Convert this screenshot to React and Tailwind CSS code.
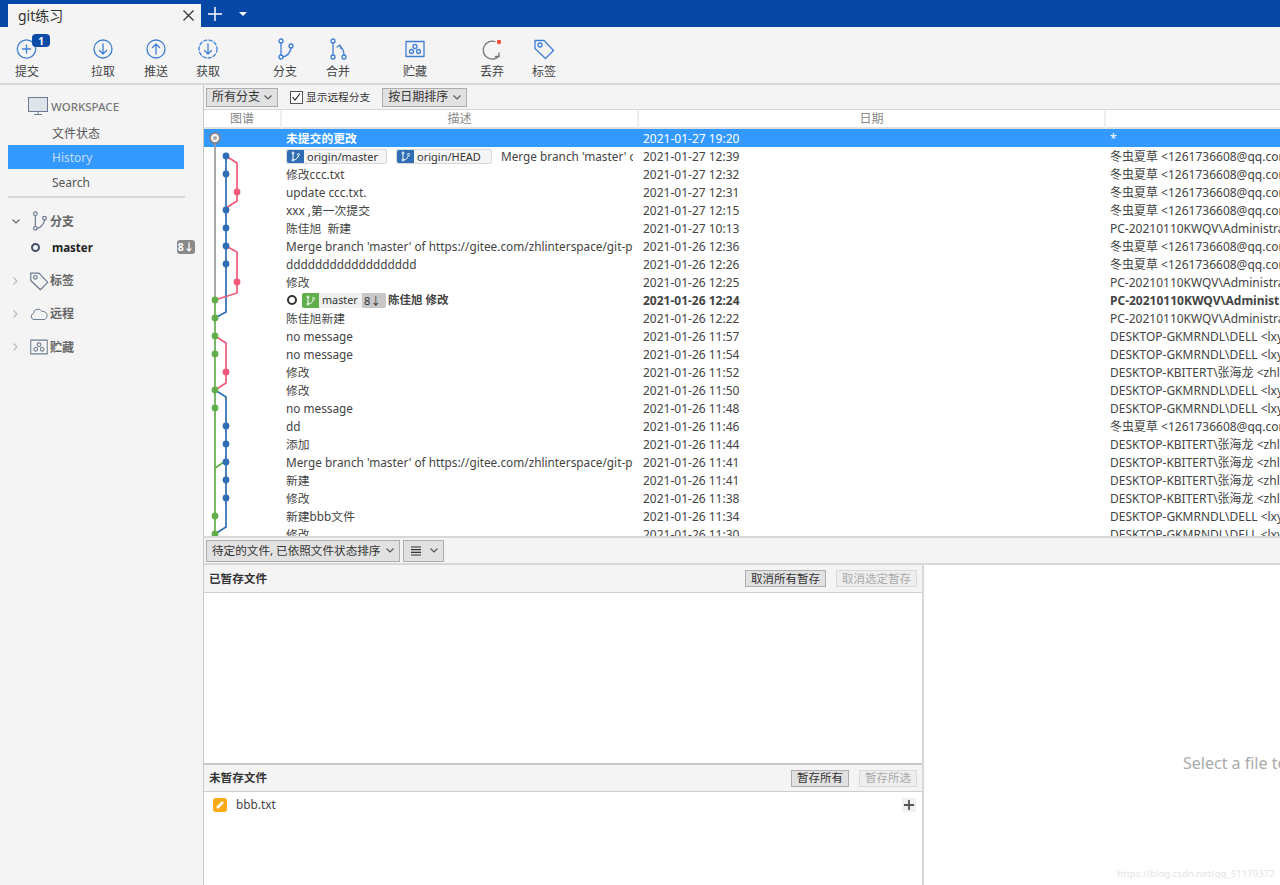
import React from "react";

const FONT = "font-['Noto_Sans','Noto_Sans_CJK_SC',sans-serif]";
const BLUE = "#3f7fd6";
const SLATE = "#6b7a90";

const Svg = ({ s = 24, children, c = BLUE, w = 1.3, vb = "0 0 24 24" }) => (
  <svg width={s} height={s} viewBox={vb} fill="none" stroke={c} strokeWidth={w} strokeLinecap="round" strokeLinejoin="round">
    {children}
  </svg>
);

const IconCommit = () => (
  <Svg>
    <circle cx="11.500" cy="12" r="9.200" />
    <path d="M11.500 8v8M7.500 12h8" />
  </Svg>
);
const IconPull = () => (
  <Svg>
    <circle cx="12" cy="12" r="9" />
    <path d="M12 7v10M8.500 13.500 12 17l3.500-3.500" />
  </Svg>
);
const IconPush = () => (
  <Svg>
    <circle cx="12" cy="12" r="9" />
    <path d="M12 17V7M8.500 10.500 12 7l3.500 3.500" />
  </Svg>
);
const IconFetch = () => (
  <Svg>
    <circle cx="12" cy="12" r="9" strokeDasharray="3.200 2.200" />
    <path d="M12 7v10M8.500 13.500 12 17l3.500-3.500" />
  </Svg>
);
const IconBranch = ({ c = BLUE, s = 24 }) => (
  <Svg c={c} s={s}>
    <circle cx="8" cy="4" r="2" />
    <circle cx="8" cy="20" r="2" />
    <circle cx="18" cy="9" r="2" />
    <path d="M8 6v12M10 20c4-1 7-4 8-9" />
  </Svg>
);
const IconMerge = () => (
  <Svg>
    <circle cx="7" cy="4" r="2" />
    <circle cx="7" cy="20" r="2" />
    <circle cx="18" cy="20" r="2" />
    <path d="M7 6v12M18 18c0-3-1-6-4-9M11 10l3-2 1 3.500" />
  </Svg>
);
const IconStash = ({ c = BLUE, s = 24, w = 1.3 }) => (
  <Svg c={c} s={s} w={w}>
    <rect x="3" y="4.500" width="18" height="15" />
    <circle cx="12" cy="9.500" r="2" />
    <circle cx="8.500" cy="14.500" r="2" />
    <circle cx="15.500" cy="14.500" r="2" />
  </Svg>
);
const IconDiscard = () => (
  <Svg c="#777">
    <path d="M15 4.500A9 9 0 1 0 19 19" />
    <path d="M19 16v3.500h-3.500" />
    <circle cx="19" cy="5" r="2.200" fill="#f0503c" stroke="none" />
  </Svg>
);
const IconTag = ({ c = BLUE, s = 24 }) => (
  <Svg c={c} s={s}>
    <path d="M3 3.500h9l9.500 10-8 8L3 11.500z" />
    <circle cx="8" cy="8" r="2" />
  </Svg>
);
const Chevron = ({ c = "#555" }) => (
  <svg width="8" height="5" viewBox="0 0 8 5" fill="none" stroke={c} strokeWidth="1.100">
    <path d="M.5.500 4 4 7.500.500" />
  </svg>
);
const MiniBranch = () => (
  <svg width="11" height="11" viewBox="0 0 11 11" fill="none" stroke="#fff" strokeWidth="1">
    <circle cx="3" cy="2" r="1" />
    <circle cx="3" cy="9" r="1" />
    <circle cx="8.500" cy="3.500" r="1" />
    <path d="M3 3v5M4 9c2.500-.5 4-2.500 4.500-4.500" />
  </svg>
);

const tools = [
  { l: "提交", i: <IconCommit />, ml: "ml-0", badge: true },
  { l: "拉取", i: <IconPull />, ml: "ml-6" },
  { l: "推送", i: <IconPush />, ml: "ml-px" },
  { l: "获取", i: <IconFetch />, ml: "ml-0" },
  { l: "分支", i: <IconBranch />, ml: "ml-[25px]" },
  { l: "合并", i: <IconMerge />, ml: "ml-px" },
  { l: "贮藏", i: <IconStash />, ml: "ml-[25px]" },
  { l: "丢弃", i: <IconDiscard />, ml: "ml-[25px]" },
  { l: "标签", i: <IconTag />, ml: "ml-0" },
];

const A = {
  d: "冬虫夏草 <1261736608@qq.com>",
  p: "PC-20210110KWQV\\Administra",
  g: "DESKTOP-GKMRNDL\\DELL <lxy",
  k: "DESKTOP-KBITERT\\张海龙 <zhl",
};

const MERGE = "Merge branch 'master' of https://gitee.com/zhlinterspace/git-p";

const rows = [
  ["未提交的更改", "2021-01-27 19:20", "*"],
  ["", "2021-01-27 12:39", A.d],
  ["修改ccc.txt", "2021-01-27 12:32", A.d],
  ["update ccc.txt.", "2021-01-27 12:31", A.d],
  ["xxx ,第一次提交", "2021-01-27 12:15", A.d],
  ["陈佳旭  新建", "2021-01-27 10:13", A.p],
  [MERGE, "2021-01-26 12:36", A.d],
  ["dddddddddddddddddd", "2021-01-26 12:26", A.d],
  ["修改", "2021-01-26 12:25", A.p],
  ["陈佳旭 修改", "2021-01-26 12:24", "PC-20210110KWQV\\Administ"],
  ["陈佳旭新建", "2021-01-26 12:22", A.p],
  ["no message", "2021-01-26 11:57", A.g],
  ["no message", "2021-01-26 11:54", A.g],
  ["修改", "2021-01-26 11:52", A.k],
  ["修改", "2021-01-26 11:50", A.g],
  ["no message", "2021-01-26 11:48", A.g],
  ["dd", "2021-01-26 11:46", A.d],
  ["添加", "2021-01-26 11:44", A.k],
  [MERGE, "2021-01-26 11:41", A.k],
  ["新建", "2021-01-26 11:41", A.k],
  ["修改", "2021-01-26 11:38", A.k],
  ["新建bbb文件", "2021-01-26 11:34", A.g],
  ["修改", "2021-01-26 11:30", A.g],
];

const Graph = () => {
  const y = (i) => 138 + 18 * i;
  const dots = [
    [226, 1, "#2f6eb5"], [226, 2, "#2f6eb5"], [237, 3, "#f2597a"], [226, 4, "#2f6eb5"], [226, 5, "#2f6eb5"],
    [226, 6, "#2f6eb5"], [226, 7, "#2f6eb5"], [237, 8, "#f2597a"], [215, 9, "#62ad4c"], [215, 10, "#62ad4c"],
    [215, 11, "#62ad4c"], [215, 12, "#62ad4c"], [226, 13, "#f2597a"], [215, 14, "#62ad4c"], [215, 15, "#62ad4c"],
    [226, 16, "#2f6eb5"], [226, 17, "#2f6eb5"], [226, 18, "#2f6eb5"], [226, 19, "#2f6eb5"], [226, 20, "#2f6eb5"],
    [215, 21, "#62ad4c"], [215, 22, "#62ad4c"],
  ];
  return (
    <svg className="absolute left-0 top-0" width="77" height="407" viewBox="204 129 77 407" fill="none" strokeWidth="1.700">
      <path d="M215 138V300" stroke="#999" />
      <path d="M215 300V536" stroke="#62ad4c" />
      <path d="M224 462 215 468" stroke="#62ad4c" />
      <path d="M226 156V312L215 318" stroke="#2f6eb5" />
      <path d="M215 390 226 397V527L215 534" stroke="#2f6eb5" />
      <path d="M226 156 237 163V201L226 208" stroke="#f2597a" />
      <path d="M226 246 237 252V293L215 300" stroke="#f2597a" />
      <path d="M215 336 226 343V383L215 390" stroke="#f2597a" />
      <circle cx="215" cy="138" r="5" fill="#f4f4f4" stroke="#808080" strokeWidth="1.700" />
      <circle cx="215" cy="138" r="2" fill="#a8a8a8" stroke="none" />
      {dots.map(([x, i, c]) => (
        <circle key={`${x}-${i}`} cx={x} cy={y(i)} r="3.400" fill={c} stroke="none" />
      ))}
    </svg>
  );
};

const RefPill = ({ name, w }) => (
  <span className={`inline-flex h-[15px] shrink-0 items-center rounded-[2px] border border-[#d8d8d8] bg-[#f5f5f5] ${w}`}>
    <span className="flex h-full w-[17px] items-center justify-center rounded-l-[2px] bg-[#2f6eb5]">
      <MiniBranch />
    </span>
    <span className="pl-[3px] text-[11px] leading-none text-[#333]">{name}</span>
  </span>
);

const Desc = ({ i, text }) => {
  if (i === 1)
    return (
      <span className="flex items-center">
        <RefPill name="origin/master" w="w-[101px]" />
        <span className="w-[9px] shrink-0" />
        <RefPill name="origin/HEAD" w="w-[96px]" />
        <span className="ml-[9px]">Merge branch 'master' o</span>
      </span>
    );
  if (i === 9)
    return (
      <span className="flex items-center">
        <span className="ml-px mr-[5px] h-[10px] w-[10px] shrink-0 rounded-full border-2 border-[#333]" />
        <span className="inline-flex h-[15px] w-[84px] shrink-0 items-center overflow-hidden rounded-[2px] bg-[#f0f0f0]">
          <span className="flex h-full w-[17px] items-center justify-center bg-[#62ad4c]">
            <MiniBranch />
          </span>
          <span className="w-[43px] pl-[3px] text-[10.800px] font-normal leading-none text-[#333]">master</span>
          <span className="flex h-full w-[24px] items-center bg-[#c8c8c8] pl-[2px] text-[11px] font-normal leading-none text-[#333]">8↓</span>
        </span>
        <span className="ml-[2px] text-[11.500px]">{text}</span>
      </span>
    );
  return text;
};

const Select = ({ children, w }) => (
  <div className={`flex h-[19px] items-center justify-between border border-[#adadad] bg-[#e1e1e1] pl-[5px] pr-[5px] text-[12px] leading-none text-[#333] ${w}`}>
    <span className="whitespace-nowrap">{children}</span>
    <Chevron />
  </div>
);

const PanelHead = ({ title, h, children }) => (
  <div className={`flex items-center justify-between border-b border-[#d0d0d0] bg-[#f4f4f4] pl-[5px] pr-[5px] ${h}`}>
    <span className="text-[11.600px] font-bold text-[#333]">{title}</span>
    <div className="flex gap-[10px]">{children}</div>
  </div>
);

const Btn = ({ children, off, w }) => (
  <div
    className={`flex h-[17px] items-center justify-center border text-[11.500px] leading-none ${w} ${
      off ? "border-[#d9d9d9] bg-[#eeeeee] text-[#aaaaaa]" : "border-[#adadad] bg-[#e1e1e1] text-[#333]"
    }`}
  >
    {children}
  </div>
);

const SideGroup = ({ open, icon, label, h }) => (
  <div className={`flex items-center ${h}`}>
    <span className="flex w-[28px] justify-center pl-[3px]">
      {open ? (
        <Chevron c="#666" />
      ) : (
        <svg width="5" height="8" viewBox="0 0 5 8" fill="none" stroke="#bbb" strokeWidth="1.200">
          <path d="M.5.500 4 4 .5 7.500" />
        </svg>
      )}
    </span>
    <span className="flex w-[22px] justify-center">{icon}</span>
    <span className="pt-px text-[12px] font-bold text-[#666]">{label}</span>
  </div>
);

export default function App() {
  return (
    <div className={`flex h-[885px] w-[1280px] flex-col overflow-hidden bg-[#f4f4f4] ${FONT}`}>
      {/* title bar */}
      <div className="flex h-[27px] shrink-0 items-end bg-[#0747a6] pl-2">
        <div className="flex h-[23px] w-[193px] items-center justify-between bg-[#f4f4f4] pl-[10px] pr-[7px]">
          <span className="text-[14px] leading-none text-[#333]">git练习</span>
          <svg width="11" height="11" viewBox="0 0 11 11" stroke="#333" strokeWidth="1.200">
            <path d="M.5.500l10 10M10.500.500l-10 10" />
          </svg>
        </div>
        <div className="flex h-full items-center pl-[7px]">
          <svg width="14" height="14" viewBox="0 0 14 14" stroke="#fff" strokeWidth="1.500">
            <path d="M7 0v14M0 7h14" />
          </svg>
          <span className="ml-[17px] h-0 w-0 border-x-[4px] border-t-[4px] border-x-transparent border-t-white" />
        </div>
      </div>

      {/* toolbar */}
      <div className="flex h-[58px] shrink-0 items-start border-b-2 border-[#d8d8d8] bg-[#f4f4f4] pl-px">
        {tools.map((t) => (
          <div key={t.l} className={`relative flex w-[52px] flex-col items-center pt-[10px] ${t.ml}`}>
            <div className="flex h-[24px] items-center justify-center">{t.i}</div>
            <span className="mt-[3px] text-[12px] leading-[16px] text-[#444]">{t.l}</span>
            {t.badge && (
              <span className="absolute left-[31px] top-[7px] flex h-[13px] w-[18px] items-center justify-center rounded-[4px] bg-[#0b4aa6] text-[10px] font-bold leading-none text-white">
                1
              </span>
            )}
          </div>
        ))}
      </div>

      <div className="flex min-h-0 flex-1">
        {/* sidebar */}
        <aside className="w-[204px] shrink-0 border-r border-[#c8c8c8] bg-[#f4f4f4] pl-2 pt-[9px]">
          <div className="flex h-[24px] w-[176px] items-center pl-[20px]">
            <svg width="20" height="18" viewBox="0 0 20 18" fill="#dfe3ea" stroke="#6b7a90" strokeWidth="1">
              <rect x=".5" y=".5" width="19" height="14" />
              <path d="M6 17.500h8M10 15v2.500" />
            </svg>
            <span className="ml-[3px] pt-px text-[11.500px] font-medium text-[#777]">WORKSPACE</span>
          </div>
          <div className="flex h-[27px] w-[176px] items-center pl-[44px] pt-[5px] text-[12px] text-[#555]">文件状态</div>
          <div className="flex h-[24px] w-[176px] items-center bg-[#3399ff] pl-[44px] pt-px text-[12px] text-[#c4ddf7]">History</div>
          <div className="flex h-[25px] w-[176px] items-center pl-[44px] pt-[2px] text-[12px] text-[#555]">Search</div>
          <div className="mb-[9px] mt-[2px] h-[2px] w-[177px] bg-[#d8d8d8]" />
          <div className="-ml-2">
            <SideGroup open h="h-[28px]" label="分支" icon={<IconBranch c={SLATE} s={22} />} />
            <div className="flex h-[24px] w-[195px] items-center pl-[31px]">
              <span className="h-[9px] w-[9px] rounded-full border-2 border-[#44506a]" />
              <span className="ml-[12px] flex-1 pt-px text-[11.500px] font-bold text-[#222]">master</span>
              <span className="flex h-[14px] w-[18px] items-center justify-center rounded-[3px] bg-[#8a8a8a] text-[10.500px] font-bold leading-none text-white">8↓</span>
            </div>
            <div className="mt-[5px]">
              <SideGroup h="h-[33px]" label="标签" icon={<IconTag c={SLATE} s={22} />} />
              <SideGroup
                h="h-[33px]"
                label="远程"
                icon={
                  <svg width="18" height="12" viewBox="0 0 18 12" fill="none" stroke="#6b7a90" strokeWidth="1">
                    <path d="M4 11.500a3 3 0 0 1-.5-5.900 4.500 4.500 0 0 1 8.500-2 3.800 3.800 0 0 1 2 8z" />
                  </svg>
                }
              />
              <SideGroup h="h-[34px]" label="贮藏" icon={<IconStash c={SLATE} s={22} w={1.100} />} />
            </div>
          </div>
        </aside>

        {/* main */}
        <main className="flex min-w-0 flex-1 flex-col">
          <div className="flex h-[25px] shrink-0 items-center border-b border-[#d8d8d8] pl-[2px]">
            <Select w="w-[72px]">所有分支</Select>
            <label className="ml-[12px] flex items-center gap-[3px] text-[10.700px] leading-none text-[#333]">
              <span className="flex h-[13px] w-[13px] items-center justify-center border border-[#555] bg-white">
                <svg width="9" height="8" viewBox="0 0 9 8" fill="none" stroke="#222" strokeWidth="1.100">
                  <path d="M.5 4 3 7l5-6.500" />
                </svg>
              </span>
              显示远程分支
            </label>
            <div className="ml-[12px]">
              <Select w="w-[85px]">按日期排序</Select>
            </div>
          </div>

          {/* history */}
          <div className="h-[426px] shrink-0 overflow-hidden bg-white">
            <div className="grid h-[19px] grid-cols-[78px_357px_467px_174px] border-b-2 border-[#e2e2e2] text-center text-[12px] leading-[18px] text-[#888]">
              <div className="border-r-2 border-[#eeeeee]">图谱</div>
              <div className="border-r-2 border-[#eeeeee]">描述</div>
              <div className="border-r-2 border-[#eeeeee]">日期</div>
              <div />
            </div>
            <div className="relative">
              {rows.map(([d, t, a], i) => {
                const sel = i === 0;
                const bold = i === 9;
                return (
                  <div
                    key={i}
                    className={`grid h-[18px] grid-cols-[77px_357px_467px_175px] items-center whitespace-pre pt-px text-[12px] leading-[18px] ${
                      sel ? "bg-[#3399ff] text-white" : "text-[#444]"
                    } ${bold ? "font-bold text-[#111]" : ""}`}
                  >
                    <div />
                    <div className={`-mt-[2px] w-[352px] overflow-hidden pl-[5px] text-[11.800px] ${sel ? "font-bold" : ""}`}>
                      <Desc i={i} text={d} />
                    </div>
                    <div className="pl-[5px]">{t}</div>
                    <div className="overflow-hidden pl-[5px]">{a}</div>
                  </div>
                );
              })}
              <Graph />
            </div>
          </div>

          {/* file bar */}
          <div className="flex h-[29px] shrink-0 items-center gap-[3px] border-y-2 border-[#d8d8d8] pl-[2px]">
            <div className="flex h-[22px] w-[194px] items-center justify-between border border-[#adadad] bg-[#e1e1e1] pl-[5px] pr-[5px] text-[11.600px] text-[#333]">
              <span className="whitespace-nowrap">待定的文件, 已依照文件状态排序</span>
              <Chevron />
            </div>
            <div className="flex h-[22px] w-[41px] items-center justify-between border border-[#adadad] bg-[#e1e1e1] pl-[7px] pr-[5px] text-[#333]">
              <svg width="10" height="10" viewBox="0 0 10 10" stroke="#333" strokeWidth="1.200">
                <path d="M0 1h10M0 3.700h10M0 6.300h10M0 9h10" />
              </svg>
              <Chevron />
            </div>
          </div>

          {/* panels */}
          <div className="flex min-h-0 flex-1">
            <div className="flex w-[720px] shrink-0 flex-col border-r-2 border-[#d8d8d8] bg-white">
              <PanelHead h="h-[28px]" title="已暂存文件">
                <Btn w="w-[81px]">取消所有暂存</Btn>
                <Btn off w="w-[81px]">取消选定暂存</Btn>
              </PanelHead>
              <div className="h-[172px] border-b-2 border-[#c8c8c8]" />
              <PanelHead h="h-[27px]" title="未暂存文件">
                <Btn w="w-[58px]">暂存所有</Btn>
                <Btn off w="w-[58px]">暂存所选</Btn>
              </PanelHead>
              <div className="flex h-[25px] items-center pl-[9px] pr-[6px]">
                <svg width="14" height="14" viewBox="0 0 14 14">
                  <rect width="14" height="14" rx="3" fill="#fbab18" />
                  <path d="M4 10 10 4" stroke="#fff" strokeWidth="2.500" />
                </svg>
                <span className="ml-[9px] flex-1 text-[11.800px] text-[#444]">bbb.txt</span>
                <span className="flex h-[14px] w-[14px] items-center justify-center rounded-[2px] bg-[#f0f0f0]">
                  <svg width="10" height="10" viewBox="0 0 10 10" stroke="#555" strokeWidth="1.800">
                    <path d="M5 0v10M0 5h10" />
                  </svg>
                </span>
              </div>
            </div>
            <div className="relative flex min-w-0 flex-1 items-center overflow-hidden bg-white pl-[259px] pt-[76px]">
              <span className="whitespace-nowrap text-[16px] text-[#aaaaaa]">Select a file to</span>
              <span className="absolute bottom-[6px] left-[193px] whitespace-nowrap text-[9.600px] leading-none text-[#e4e4e4]">https://blog.csdn.net/qq_51179372</span>
            </div>
          </div>
        </main>
      </div>
    </div>
  );
}
